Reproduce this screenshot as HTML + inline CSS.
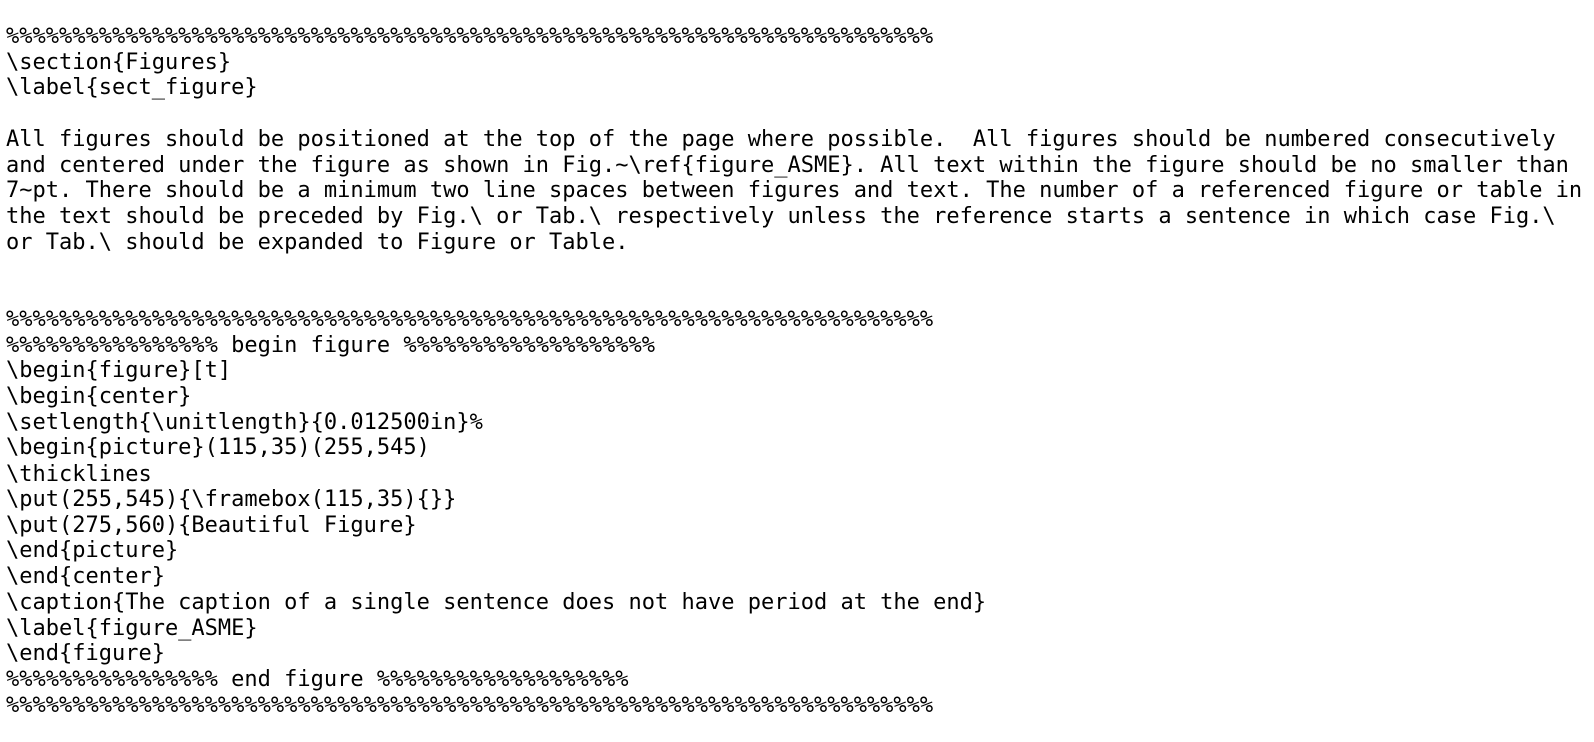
<!DOCTYPE html>
<html><head><meta charset="utf-8"><style>
html,body{margin:0;background:#fff;width:1594px;height:742px;overflow:hidden;position:relative}
div{position:absolute;left:6px;white-space:pre;font-family:"DejaVu Sans Mono","Liberation Mono",monospace;font-size:22px;line-height:25px;color:#000}
</style></head><body>
<div style="top:24px">%%%%%%%%%%%%%%%%%%%%%%%%%%%%%%%%%%%%%%%%%%%%%%%%%%%%%%%%%%%%%%%%%%%%%%</div>
<div style="top:50px">\section{Figures}</div>
<div style="top:75px">\label{sect_figure}</div>
<div style="top:127px">All figures should be positioned at the top of the page where possible.  All figures should be numbered consecutively</div>
<div style="top:153px">and centered under the figure as shown in Fig.~\ref{figure_ASME}. All text within the figure should be no smaller than</div>
<div style="top:178px">7~pt. There should be a minimum two line spaces between figures and text. The number of a referenced figure or table in</div>
<div style="top:204px">the text should be preceded by Fig.\ or Tab.\ respectively unless the reference starts a sentence in which case Fig.\</div>
<div style="top:230px">or Tab.\ should be expanded to Figure or Table.</div>
<div style="top:307px">%%%%%%%%%%%%%%%%%%%%%%%%%%%%%%%%%%%%%%%%%%%%%%%%%%%%%%%%%%%%%%%%%%%%%%</div>
<div style="top:333px">%%%%%%%%%%%%%%%% begin figure %%%%%%%%%%%%%%%%%%%</div>
<div style="top:358px">\begin{figure}[t]</div>
<div style="top:384px">\begin{center}</div>
<div style="top:410px">\setlength{\unitlength}{0.012500in}%</div>
<div style="top:435px">\begin{picture}(115,35)(255,545)</div>
<div style="top:462px">\thicklines</div>
<div style="top:487px">\put(255,545){\framebox(115,35){}}</div>
<div style="top:513px">\put(275,560){Beautiful Figure}</div>
<div style="top:538px">\end{picture}</div>
<div style="top:564px">\end{center}</div>
<div style="top:590px">\caption{The caption of a single sentence does not have period at the end}</div>
<div style="top:616px">\label{figure_ASME}</div>
<div style="top:641px">\end{figure}</div>
<div style="top:667px">%%%%%%%%%%%%%%%% end figure %%%%%%%%%%%%%%%%%%%</div>
<div style="top:693px">%%%%%%%%%%%%%%%%%%%%%%%%%%%%%%%%%%%%%%%%%%%%%%%%%%%%%%%%%%%%%%%%%%%%%%</div>
</body></html>
